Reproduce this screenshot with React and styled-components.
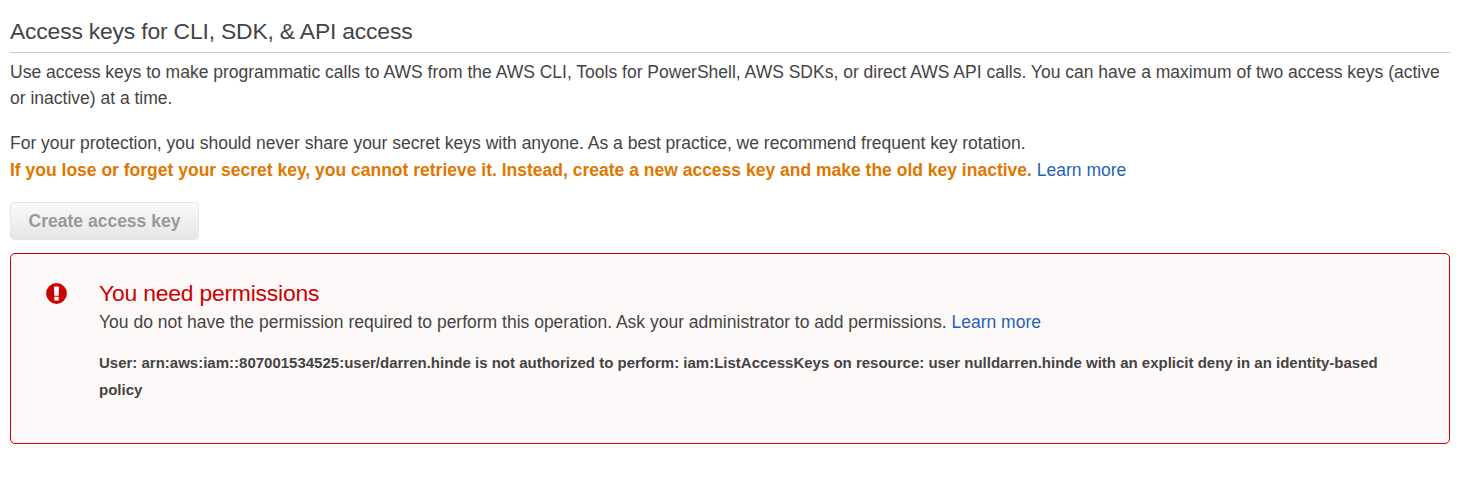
import React from "react";
import styled, { createGlobalStyle } from "styled-components";

const Global = createGlobalStyle`
  body { margin: 0; background: #fff; color: #444; font-family: "Liberation Sans", Arial, sans-serif; font-size: 17.5px; line-height: 26.25px; }
`;
const Page = styled.main`
  box-sizing: border-box;
  width: 1450px;
  padding: 15px 0 0 10px;
`;
const Heading = styled.h2`
  margin: 0 0 6px;
  padding-bottom: 5px;
  border-bottom: 1px solid #ccc;
  font-size: 22.9px;
  letter-spacing: -0.19px;
  line-height: 32px;
  font-weight: 400;
`;
const Paragraph = styled.p`
  margin: 0 0 18.75px;
  white-space: nowrap;
`;
const Warning = styled.strong`
  color: #e07700;
`;
const Link = styled.a`
  color: #1f62b8;
  text-decoration: none;
`;
const Button = styled.button`
  display: block;
  box-sizing: border-box;
  width: 189px;
  height: 38px;
  padding: 2px 0 0;
  border: 1px solid #e6e6e6;
  border-radius: 4px;
  background: linear-gradient(#fafafa, #e6e6e6);
  color: #999;
  font: bold 17.5px "Liberation Sans", Arial, sans-serif;
`;
const Alert = styled.section`
  display: flex;
  box-sizing: border-box;
  height: 191px;
  margin-top: 13px;
  padding: 25px 0 0 35px;
  border: 1px solid #c00;
  border-radius: 5px;
  background: #fdf9f8;
`;
const AlertIcon = styled.svg`
  width: 21px;
  height: 21px;
  margin: 4px 32px 0 0;
`;
const AlertTitle = styled.h3`
  margin: 0 0 2px;
  color: #c00;
  font-size: 22.9px;
  letter-spacing: -0.21px;
  line-height: 28px;
  font-weight: 400;
`;
const Detail = styled.p`
  margin: 14px 0 0;
  font-size: 15px;
  line-height: 27px;
  font-weight: 700;
  white-space: nowrap;
`;
const Message = styled.div`
  white-space: nowrap;
`;

export default function App() {
  return (
    <Page>
      <Global />
      <Heading>Access keys for CLI, SDK, &amp; API access</Heading>
      <Paragraph>
        Use access keys to make programmatic calls to AWS from the AWS CLI, Tools for PowerShell, AWS SDKs, or direct AWS API calls. You can have a maximum of two access keys (active<br />
        or inactive) at a time.
      </Paragraph>
      <Paragraph>
        For your protection, you should never share your secret keys with anyone. As a best practice, we recommend frequent key rotation.<br />
        <Warning>If you lose or forget your secret key, you cannot retrieve it. Instead, create a new access key and make the old key inactive.</Warning> <Link>Learn more</Link>
      </Paragraph>
      <Button disabled>Create access key</Button>
      <Alert>
        <AlertIcon viewBox="0 0 21 21">
          <circle cx="10.5" cy="10.5" r="10.4" fill="#c00" />
          <path d="M8 3.5h5l-.3 9.2H8.3zM8.3 13.8h4.4v3.6H8.3z" fill="#fff" />
        </AlertIcon>
        <div>
          <AlertTitle>You need permissions</AlertTitle>
          <Message>You do not have the permission required to perform this operation. Ask your administrator to add permissions. <Link>Learn more</Link></Message>
          <Detail>
            User: arn:aws:iam::807001534525:user/darren.hinde is not authorized to perform: iam:ListAccessKeys on resource: user nulldarren.hinde with an explicit deny in an identity-based<br />
            policy
          </Detail>
        </div>
      </Alert>
    </Page>
  );
}
